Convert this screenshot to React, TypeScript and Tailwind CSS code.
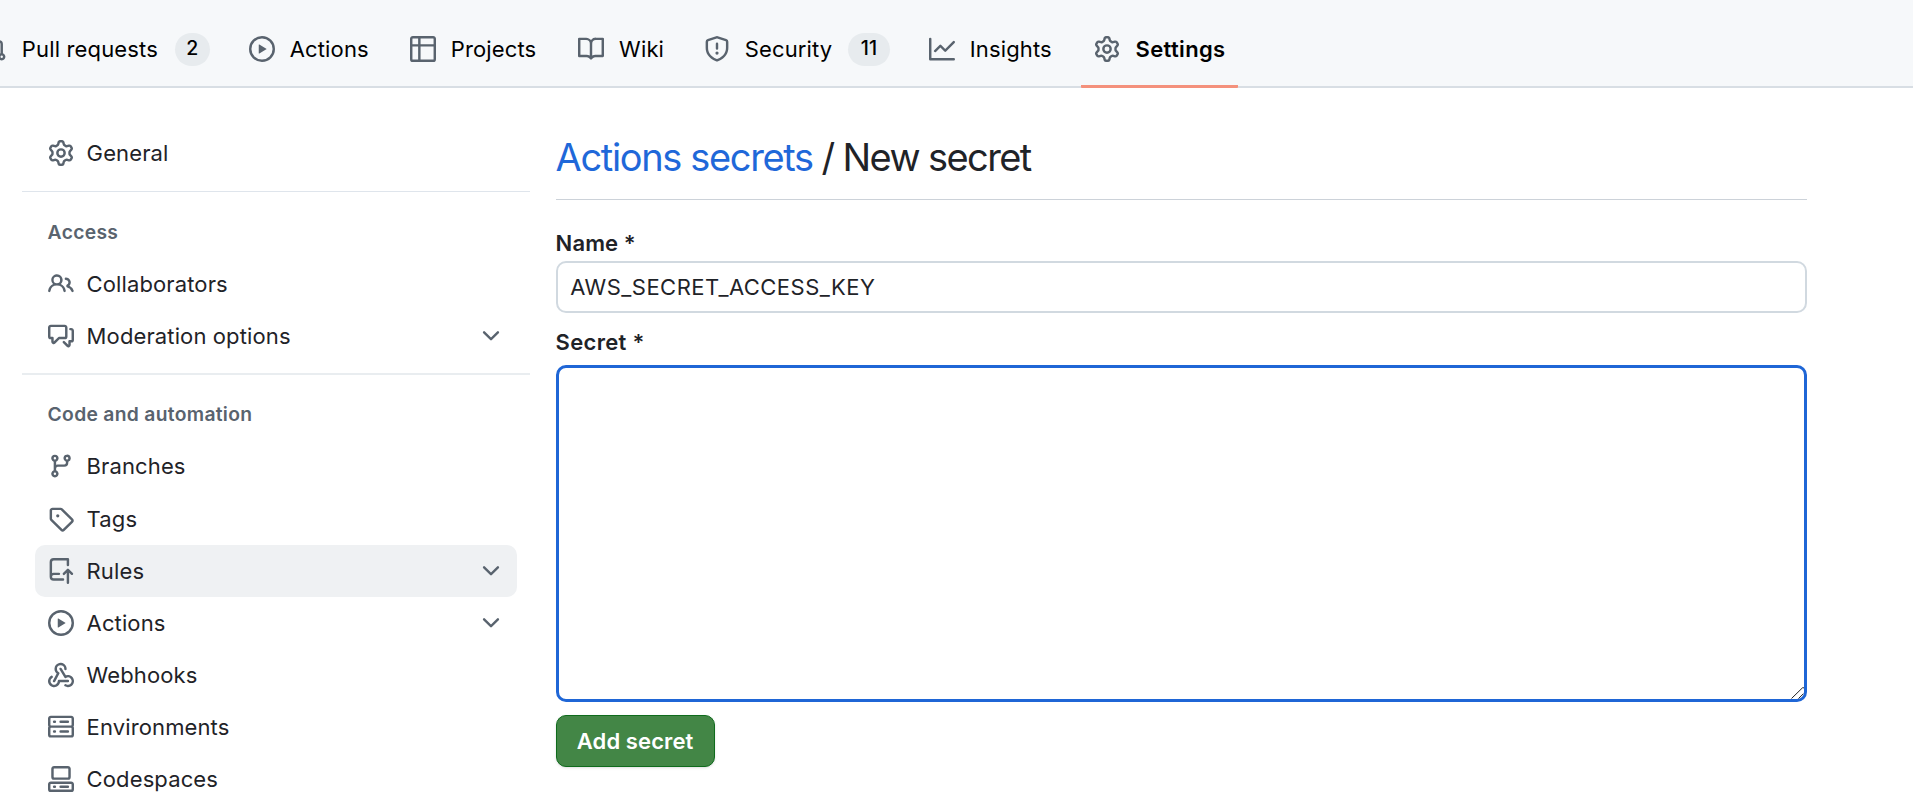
import type { ReactNode } from "react";

const paths = {
  pullRequest:
    "M1.5 3.25a2.25 2.25 0 1 1 3 2.122v5.256a2.251 2.251 0 1 1-1.5 0V5.372A2.25 2.25 0 0 1 1.5 3.25Zm5.677-.177L9.573.677A.25.25 0 0 1 10 .854V2.5h1A2.5 2.5 0 0 1 13.5 5v5.628a2.251 2.251 0 1 1-1.5 0V5a1 1 0 0 0-1-1h-1v1.646a.25.25 0 0 1-.427.177L7.177 3.427a.25.25 0 0 1 0-.354ZM3.75 2.5a.75.75 0 1 0 0 1.5.75.75 0 0 0 0-1.5Zm0 9.5a.75.75 0 1 0 0 1.5.75.75 0 0 0 0-1.5Zm8.25.75a.75.75 0 1 0 1.5 0 .75.75 0 0 0-1.5 0Z",
  play: "M8 0a8 8 0 1 1 0 16A8 8 0 0 1 8 0ZM1.5 8a6.5 6.5 0 1 0 13 0 6.5 6.5 0 0 0-13 0Zm4.879-2.773 4.264 2.559a.25.25 0 0 1 0 .428l-4.264 2.559A.25.25 0 0 1 6 10.559V5.442a.25.25 0 0 1 .379-.215Z",
  table:
    "M0 1.75C0 .784.784 0 1.75 0h12.5C15.216 0 16 .784 16 1.75v12.5A1.75 1.75 0 0 1 14.25 16H1.75A1.75 1.75 0 0 1 0 14.25ZM6.5 6.5v8h7.75a.25.25 0 0 0 .25-.25V6.5Zm8-1.5V1.75a.25.25 0 0 0-.25-.25H6.5V5Zm-13 1.5v7.75c0 .138.112.25.25.25H5v-8ZM5 5V1.5H1.75a.25.25 0 0 0-.25.25V5Z",
  book: "M0 1.75A.75.75 0 0 1 .75 1h4.253c1.227 0 2.317.59 3 1.501A3.743 3.743 0 0 1 11.006 1h4.245a.75.75 0 0 1 .75.75v10.5a.75.75 0 0 1-.75.75h-4.507a2.25 2.25 0 0 0-1.591.659l-.622.621a.75.75 0 0 1-1.06 0l-.622-.621A2.25 2.25 0 0 0 5.258 13H.75a.75.75 0 0 1-.75-.75Zm7.251 10.324.004-5.073-.002-2.253A2.25 2.25 0 0 0 5.003 2.5H1.5v9h3.757a3.75 3.75 0 0 1 1.994.574ZM8.755 4.75l-.004 7.322a3.752 3.752 0 0 1 1.992-.572H14.5v-9h-3.495a2.25 2.25 0 0 0-2.25 2.25Z",
  shield:
    "M7.467.133a1.748 1.748 0 0 1 1.066 0l5.25 1.68A1.75 1.75 0 0 1 15 3.48V7c0 1.566-.32 3.182-1.303 4.682-.983 1.498-2.585 2.813-5.032 3.855a1.697 1.697 0 0 1-1.33 0c-2.447-1.042-4.049-2.357-5.032-3.855C1.32 10.182 1 8.566 1 7V3.48a1.75 1.75 0 0 1 1.217-1.667Zm.61 1.429a.25.25 0 0 0-.153 0l-5.25 1.68a.25.25 0 0 0-.174.238V7c0 1.358.275 2.666 1.057 3.86.784 1.194 2.121 2.34 4.366 3.297a.196.196 0 0 0 .154 0c2.245-.956 3.582-2.104 4.366-3.298C13.225 9.666 13.5 8.36 13.5 7V3.48a.251.251 0 0 0-.174-.237l-5.25-1.68ZM8.75 4.75v3a.75.75 0 0 1-1.5 0v-3a.75.75 0 0 1 1.5 0ZM9 10.5a1 1 0 1 1-2 0 1 1 0 0 1 2 0Z",
  graph:
    "M1.5 1.75V13.5h13.75a.75.75 0 0 1 0 1.5H.75a.75.75 0 0 1-.75-.75V1.75a.75.75 0 0 1 1.5 0Zm14.28 2.53-5.25 5.25a.75.75 0 0 1-1.06 0L7 7.06 4.28 9.78a.751.751 0 0 1-1.042-.018.751.751 0 0 1-.018-1.042l3.25-3.25a.75.75 0 0 1 1.06 0L10 7.94l4.72-4.72a.751.751 0 0 1 1.042.018.751.751 0 0 1 .018 1.042Z",
  gear: "M8 0a8.2 8.2 0 0 1 .701.031C9.444.095 9.99.645 10.16 1.29l.288 1.107c.018.066.079.158.212.224.231.114.454.243.668.386.123.082.233.09.299.071l1.103-.303c.644-.176 1.392.021 1.82.63.27.385.506.792.704 1.218.315.675.111 1.422-.364 1.891l-.814.806c-.049.048-.098.147-.088.294.016.257.016.515 0 .772-.01.147.038.246.088.294l.814.806c.475.469.679 1.216.364 1.891a7.977 7.977 0 0 1-.704 1.217c-.428.61-1.176.807-1.82.63l-1.102-.302c-.067-.019-.177-.011-.3.071a5.909 5.909 0 0 1-.668.386c-.133.066-.194.158-.211.224l-.29 1.106c-.168.646-.715 1.196-1.458 1.26a8.006 8.006 0 0 1-1.402 0c-.743-.064-1.289-.614-1.458-1.26l-.289-1.106c-.018-.066-.079-.158-.212-.224a5.738 5.738 0 0 1-.668-.386c-.123-.082-.233-.09-.299-.071l-1.103.303c-.644.176-1.392-.021-1.82-.63a8.12 8.12 0 0 1-.704-1.218c-.315-.675-.111-1.422.363-1.891l.815-.806c.05-.048.098-.147.088-.294a6.214 6.214 0 0 1 0-.772c.01-.147-.038-.246-.088-.294l-.815-.806C.635 6.045.431 5.298.746 4.623a7.92 7.92 0 0 1 .704-1.217c.428-.61 1.176-.807 1.82-.63l1.102.302c.067.019.177.011.3-.071.214-.143.437-.272.668-.386.133-.066.194-.158.211-.224l.29-1.106C6.009.645 6.556.095 7.299.03 7.53.01 7.764 0 8 0Zm-.571 1.525c-.036.003-.108.036-.137.146l-.289 1.105c-.147.561-.549.967-.998 1.189-.173.086-.34.183-.5.29-.417.278-.97.423-1.529.27l-1.103-.303c-.109-.03-.175.016-.195.045-.22.312-.412.644-.573.99-.014.031-.021.11.059.19l.815.806c.411.406.562.957.53 1.456a4.709 4.709 0 0 0 0 .582c.032.499-.119 1.05-.53 1.456l-.815.806c-.081.08-.073.159-.059.19.162.346.353.677.573.989.02.03.085.076.195.046l1.102-.303c.56-.153 1.113-.008 1.53.27.161.107.328.204.501.29.447.222.85.629.997 1.189l.289 1.105c.029.109.101.143.137.146a6.6 6.6 0 0 0 1.142 0c.036-.003.108-.036.137-.146l.289-1.105c.147-.561.549-.967.998-1.189.173-.086.34-.183.5-.29.417-.278.97-.423 1.529-.27l1.103.303c.109.029.175-.016.195-.045.22-.313.411-.644.573-.99.014-.031.021-.11-.059-.19l-.815-.806c-.411-.406-.562-.957-.53-1.456a4.709 4.709 0 0 0 0-.582c-.032-.499.119-1.05.53-1.456l.815-.806c.081-.08.073-.159.059-.19a6.464 6.464 0 0 0-.573-.989c-.02-.03-.085-.076-.195-.046l-1.102.303c-.56.153-1.113.008-1.53-.27a4.44 4.44 0 0 0-.501-.29c-.447-.222-.85-.629-.997-1.189l-.289-1.105c-.029-.11-.101-.143-.137-.146a6.6 6.6 0 0 0-1.142 0ZM11 8a3 3 0 1 1-6 0 3 3 0 0 1 6 0ZM9.5 8a1.5 1.5 0 1 0-3.001.001A1.5 1.5 0 0 0 9.5 8Z",
  people:
    "M2 5.5a3.5 3.5 0 1 1 5.898 2.549 5.508 5.508 0 0 1 3.034 4.084.75.75 0 1 1-1.482.235 4 4 0 0 0-7.9 0 .75.75 0 0 1-1.482-.236A5.507 5.507 0 0 1 3.102 8.05 3.493 3.493 0 0 1 2 5.5ZM11 4a3.001 3.001 0 0 1 2.22 5.018 5.01 5.01 0 0 1 2.56 3.012.749.749 0 0 1-.885.954.752.752 0 0 1-.549-.514 3.507 3.507 0 0 0-2.522-2.372.75.75 0 0 1-.574-.73v-.352a.75.75 0 0 1 .416-.672A1.5 1.5 0 0 0 11 5.5.75.75 0 0 1 11 4Zm-5.5-.5a2 2 0 1 0-.001 3.999A2 2 0 0 0 5.5 3.5Z",
  discussion:
    "M1.75 1h8.5c.966 0 1.75.784 1.75 1.75v5.5A1.75 1.75 0 0 1 10.25 10H7.061l-2.574 2.573A1.458 1.458 0 0 1 2 11.543V10h-.25A1.75 1.75 0 0 1 0 8.25v-5.5C0 1.784.784 1 1.75 1ZM1.5 2.75v5.5c0 .138.112.25.25.25h1a.75.75 0 0 1 .75.75v2.19l2.72-2.72a.749.749 0 0 1 .53-.22h3.5a.25.25 0 0 0 .25-.25v-5.5a.25.25 0 0 0-.25-.25h-8.5a.25.25 0 0 0-.25.25Zm13 2a.25.25 0 0 0-.25-.25h-.5a.75.75 0 0 1 0-1.5h.5c.966 0 1.75.784 1.75 1.75v5.5A1.75 1.75 0 0 1 14.25 12H14v1.543a1.458 1.458 0 0 1-2.487 1.03L9.22 12.28a.749.749 0 0 1 .326-1.275.749.749 0 0 1 .734.215l2.22 2.22v-2.19a.75.75 0 0 1 .75-.75h1a.25.25 0 0 0 .25-.25Z",
  branch:
    "M9.5 3.25a2.25 2.25 0 1 1 3 2.122V6A2.5 2.5 0 0 1 10 8.5H6a1 1 0 0 0-1 1v1.128a2.251 2.251 0 1 1-1.5 0V5.372a2.25 2.25 0 1 1 1.5 0v1.836A2.493 2.493 0 0 1 6 7h4a1 1 0 0 0 1-1v-.628A2.25 2.25 0 0 1 9.5 3.25Zm-6 0a.75.75 0 1 0 1.5 0 .75.75 0 0 0-1.5 0Zm8.25-.75a.75.75 0 1 0 0 1.5.75.75 0 0 0 0-1.5ZM4.25 12a.75.75 0 1 0 0 1.5.75.75 0 0 0 0-1.5Z",
  tag: "M1 7.775V2.75C1 1.784 1.784 1 2.75 1h5.025c.464 0 .91.184 1.238.513l6.25 6.25a1.75 1.75 0 0 1 0 2.474l-5.026 5.026a1.75 1.75 0 0 1-2.474 0l-6.25-6.25A1.752 1.752 0 0 1 1 7.775Zm1.5 0c0 .066.026.13.073.177l6.25 6.25a.25.25 0 0 0 .354 0l5.025-5.025a.25.25 0 0 0 0-.354l-6.25-6.25a.25.25 0 0 0-.177-.073H2.75a.25.25 0 0 0-.25.25ZM6 5a1 1 0 1 1 0 2 1 1 0 0 1 0-2Z",
  repoPush:
    "M1 2.5A2.5 2.5 0 0 1 3.5 0h8.75a.75.75 0 0 1 .75.75v3.5a.75.75 0 0 1-1.5 0V1.5h-8a1 1 0 0 0-1 1v6.708A2.493 2.493 0 0 1 3.5 9h3.25a.75.75 0 0 1 0 1.5H3.5a1 1 0 0 0 0 2h5.75a.75.75 0 0 1 0 1.5H3.5A2.5 2.5 0 0 1 1 11.5Zm13.23 7.79h-.001l-1.224-1.224v6.184a.75.75 0 0 1-1.5 0V9.066L10.28 10.29a.75.75 0 0 1-1.06-1.061l2.505-2.504a.75.75 0 0 1 1.06 0L15.29 9.23a.751.751 0 0 1-.018 1.042.751.751 0 0 1-1.042.018Z",
  webhook:
    "M5.5 4.25a2.25 2.25 0 0 1 4.5 0 .75.75 0 0 0 1.5 0 3.75 3.75 0 1 0-6.14 2.889l-2.272 4.258a.75.75 0 0 0 1.324.706L7 7.25a.75.75 0 0 0-.309-1.015A2.25 2.25 0 0 1 5.5 4.25Z M7.364 3.607a.75.75 0 0 1 1.03.257l2.608 4.349a3.75 3.75 0 1 1-.628 6.785.75.75 0 0 1 .752-1.299 2.25 2.25 0 1 0-.033-3.88.75.75 0 0 1-1.03-.256L7.107 4.636a.75.75 0 0 1 .257-1.03Z M2.9 8.776A.75.75 0 0 1 2.625 9.8 2.25 2.25 0 1 0 6 11.75a.75.75 0 0 1 .75-.751h5.5a.75.75 0 0 1 0 1.5H7.425a3.751 3.751 0 1 1-5.55-3.998.75.75 0 0 1 1.024.274Z",
  server:
    "M1.75 1h12.5c.966 0 1.75.784 1.75 1.75v4c0 .372-.116.717-.314 1 .198.283.314.628.314 1v4a1.75 1.75 0 0 1-1.75 1.75H1.75A1.75 1.75 0 0 1 0 12.75v-4c0-.358.109-.707.314-1a1.739 1.739 0 0 1-.314-1v-4C0 1.784.784 1 1.75 1ZM1.5 2.75v4c0 .138.112.25.25.25h12.5a.25.25 0 0 0 .25-.25v-4a.25.25 0 0 0-.25-.25H1.75a.25.25 0 0 0-.25.25Zm.25 5.75a.25.25 0 0 0-.25.25v4c0 .138.112.25.25.25h12.5a.25.25 0 0 0 .25-.25v-4a.25.25 0 0 0-.25-.25ZM7 4.75A.75.75 0 0 1 7.75 4h4.5a.75.75 0 0 1 0 1.5h-4.5A.75.75 0 0 1 7 4.75ZM7.75 10h4.5a.75.75 0 0 1 0 1.5h-4.5a.75.75 0 0 1 0-1.5ZM3 4.75A.75.75 0 0 1 3.75 4h.5a.75.75 0 0 1 0 1.5h-.5A.75.75 0 0 1 3 4.75ZM3.75 10h.5a.75.75 0 0 1 0 1.5h-.5a.75.75 0 0 1 0-1.5Z",
  codespaces:
    "M0 11.25c0-.966.784-1.75 1.75-1.75h12.5c.966 0 1.75.784 1.75 1.75v3A1.75 1.75 0 0 1 14.25 16H1.75A1.75 1.75 0 0 1 0 14.25Zm2-9.5C2 .784 2.784 0 3.75 0h8.5C13.216 0 14 .784 14 1.75v5a1.75 1.75 0 0 1-1.75 1.75h-8.5A1.75 1.75 0 0 1 2 6.75Zm1.75-.25a.25.25 0 0 0-.25.25v5c0 .138.112.25.25.25h8.5a.25.25 0 0 0 .25-.25v-5a.25.25 0 0 0-.25-.25Zm-2 9.5a.25.25 0 0 0-.25.25v3c0 .138.112.25.25.25h12.5a.25.25 0 0 0 .25-.25v-3a.25.25 0 0 0-.25-.25Z M7 12.75a.75.75 0 0 1 .75-.75h4.5a.75.75 0 0 1 0 1.5h-4.5a.75.75 0 0 1-.75-.75Zm-4 0a.75.75 0 0 1 .75-.75h.5a.75.75 0 0 1 0 1.5h-.5a.75.75 0 0 1-.75-.75Z",
  chevron:
    "M12.78 5.22a.749.749 0 0 1 0 1.06l-4.25 4.25a.749.749 0 0 1-1.06 0L3.22 6.28a.749.749 0 1 1 1.06-1.06L8 8.939l3.72-3.719a.749.749 0 0 1 1.06 0Z",
};

type IconName = keyof typeof paths;

function Icon({ name }: { name: IconName }) {
  return (
    <svg viewBox="0 0 16 16" className="size-[26px] shrink-0 fill-[#59636e]" aria-hidden="true">
      <path d={paths[name]} />
    </svg>
  );
}

interface TabProps {
  icon: IconName;
  label: string;
  width: string;
  count?: string;
  active?: boolean;
}

function Tab({ icon, label, width, count, active }: TabProps) {
  return (
    <a
      className={
        active
          ? "-mb-0.5 flex h-[88px] items-center gap-[15px] rounded-[1px] border-b-[3px] border-[#f4917c] px-[13px] pt-[13px] font-semibold tracking-[0.35px]"
          : "flex h-[86px] items-center gap-[15px] px-[13px] pt-3 tracking-[0.15px]"
      }
    >
      <Icon name={icon} />
      <span className={`${width} whitespace-nowrap`}>{label}</span>
      {count && (
        <span
          className={`flex h-[33px] items-center justify-center rounded-full bg-[#e7ebee] text-[19.5px] font-medium ${
            count.length > 1 ? "w-[41.5px]" : "w-[34.5px]"
          }`}
        >
          {count}
        </span>
      )}
    </a>
  );
}

interface NavItemProps {
  icon: IconName;
  label: string;
  expandable?: boolean;
  selected?: boolean;
}

function NavItem({ icon, label, expandable, selected }: NavItemProps) {
  return (
    <li
      className={`mx-[13px] flex h-[52.15px] items-center gap-[13px] rounded-[10px] px-[13px] tracking-[0.12px] ${
        selected ? "bg-[#eff1f3]" : ""
      }`}
    >
      <Icon name={icon} />
      <span className="grow">{label}</span>
      {expandable && <Icon name="chevron" />}
    </li>
  );
}

function NavHeading({ children }: { children: ReactNode }) {
  return (
    <h3 className="flex h-[51px] items-center px-[26px] text-[19.3px] font-semibold tracking-[0.3px] text-[#59636e]">
      {children}
    </h3>
  );
}

export default function App() {
  return (
    <div className="h-[800px] w-[1913px] overflow-hidden bg-white font-['Inter','Liberation_Sans',sans-serif] text-[22px] leading-none text-[#1f2328]">
      <header className="flex h-[88px] border-b-2 border-[#d8dee4] bg-[#f6f8fa] text-black">
        <div className="-ml-[32.2px] flex gap-[13px]">
          <Tab icon="pullRequest" label="Pull requests" width="w-[138.4px]" count="2" />
          <Tab icon="play" label="Actions" width="w-[81px]" />
          <Tab icon="table" label="Projects" width="w-[88.4px]" />
          <Tab icon="book" label="Wiki" width="w-[45.6px]" />
          <Tab icon="shield" label="Security" width="w-[88.5px]" count="11" />
          <Tab icon="graph" label="Insights" width="w-[85.8px]" />
          <Tab icon="gear" label="Settings" width="w-[90px]" active />
        </div>
      </header>

      <div className="flex">
        <nav className="ml-[21.6px] w-[508px] pt-[39px]">
          <ul>
            <NavItem icon="gear" label="General" />
          </ul>
          <div className="mt-[12px] mb-[14.7px] h-px bg-[#dfe5ec]" />
          <NavHeading>Access</NavHeading>
          <ul>
            <NavItem icon="people" label="Collaborators" />
            <NavItem icon="discussion" label="Moderation options" expandable />
          </ul>
          <div className="mt-[11px] mb-[14.2px] h-[2px] bg-[#e9edf0]" />
          <NavHeading>Code and automation</NavHeading>
          <ul>
            <NavItem icon="branch" label="Branches" />
            <NavItem icon="tag" label="Tags" />
            <NavItem icon="repoPush" label="Rules" expandable selected />
            <NavItem icon="play" label="Actions" expandable />
            <NavItem icon="webhook" label="Webhooks" />
            <NavItem icon="server" label="Environments" />
            <NavItem icon="codespaces" label="Codespaces" />
          </ul>
        </nav>

        <main className="ml-[26px] w-[1251.4px] pt-[43px]">
          <h1 className="flex h-[69px] items-start border-b border-[#ccd2d9] text-[38px] leading-[52px] tracking-[-1.35px]">
            <span className="w-[266px] whitespace-nowrap text-[#1f68d9]">Actions secrets</span>
            <span className="w-[21px]">/</span>
            <span className="whitespace-nowrap tracking-[-1.6px]">New secret</span>
          </h1>
          <form>
            <label htmlFor="secret-name" className="mt-[26px] mb-px flex h-[34px] items-center font-semibold tracking-[0.1px]">
              Name *
            </label>
            <input
              id="secret-name"
              defaultValue="AWS_SECRET_ACCESS_KEY"
              className="block h-[52px] w-full rounded-[10px] border-2 border-[#d1d9e0] bg-white px-[12.6px] tracking-[0.47px] outline-none"
            />
            <label htmlFor="secret-value" className="mt-[12px] mb-[6px] flex h-[34px] items-center font-semibold tracking-[0.3px]">
              Secret *
            </label>
            <div className="relative h-[337px]">
              <textarea
                id="secret-value"
                className="block h-full w-full resize-none rounded-[10px] border-[3px] border-[#1f66d6] bg-white outline-none"
              />
              <svg
                viewBox="0 0 14 12"
                className="absolute right-[2px] bottom-[3px] h-3 w-3.5 fill-none stroke-[#222]"
                aria-hidden="true"
              >
                <path d="M.5 11.5 11.5 .8H13M7.5 11.5l4.8-4.7" />
              </svg>
            </div>
            <button
              type="button"
              className="mt-[13px] h-[52px] w-[159px] rounded-[10px] border border-[#0f6b1c] bg-[#438646] font-semibold tracking-[0.1px] text-white shadow-sm"
            >
              Add secret
            </button>
          </form>
        </main>
      </div>
    </div>
  );
}
